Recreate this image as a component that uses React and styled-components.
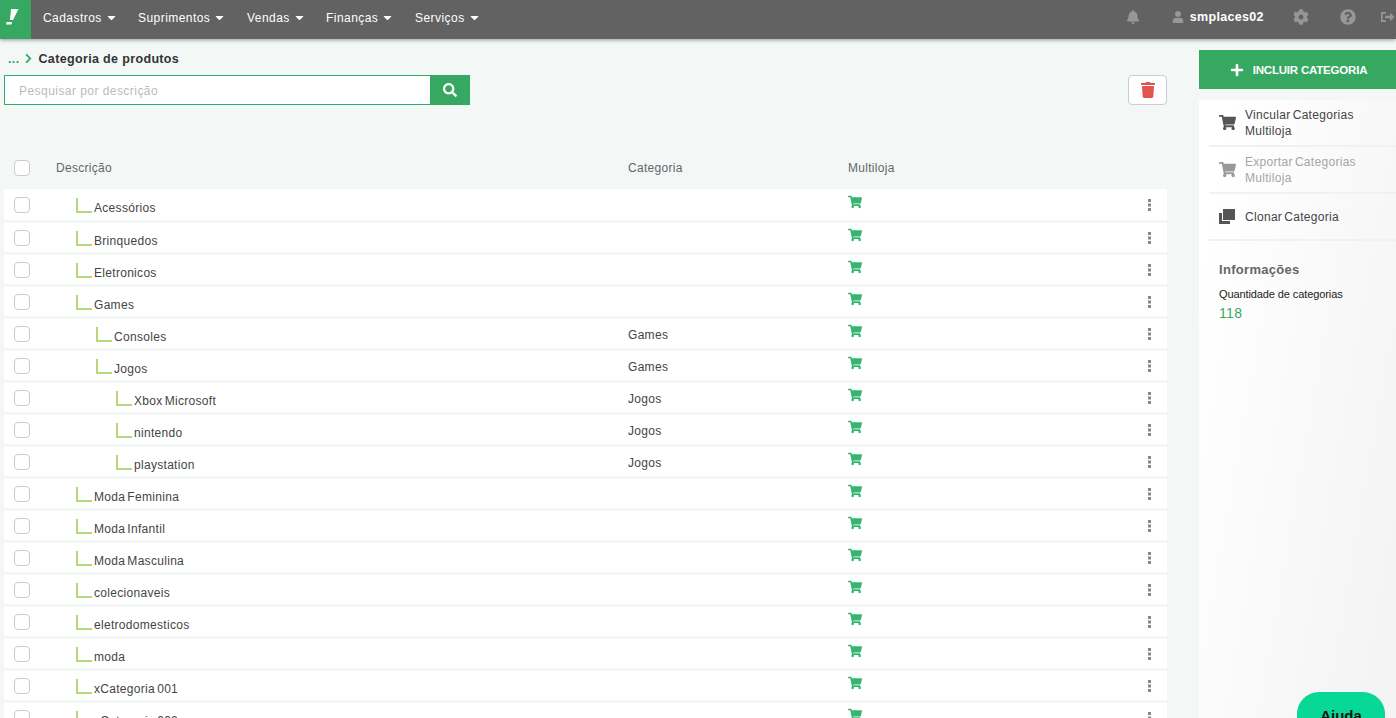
import React from 'react'
import styled, { createGlobalStyle } from 'styled-components'
import { FaBell, FaCaretDown, FaChevronRight, FaCog, FaPlus, FaQuestionCircle, FaSearch, FaShoppingCart, FaTrash, FaUser } from 'react-icons/fa'

const GlobalStyle = createGlobalStyle`
html, body {
  margin: 0;
  height: 718px;
  overflow: hidden;
  background: #f3f8f6;
  font-family: "Liberation Sans", Arial, sans-serif;
  font-size: 12px;
  letter-spacing: .3px;
  word-spacing: -1.5px;
  color: #555;
}
* { box-sizing: border-box; }
`

const Topbar = styled.header`
height: 39px;
display: flex;
align-items: center;
background: #616261;
box-shadow: 0 1px 4px rgba(0,0,0,.4);
position: relative;
overflow: hidden;
`
const Logo = styled.div`
width: 31px;
height: 39px;
flex: none;
background: #37a862;
padding: 9px 0 0 6px;
`
const NavList = styled.nav`
display: flex;
margin: 0 0 4px 12px;
flex: 1;
`
const NavItem = styled.div`
display: flex;
align-items: center;
gap: 3px;
color: #fff;
letter-spacing: .45px;
width: ${({$w}) => $w}px;
svg { font-size: 13px; }
`
const TopRight = styled.div`
display: flex;
align-items: center;
color: #979797;
width: 270px;
flex: none;
margin-bottom: 6px;
`
const TopIcon = styled.span`
display: flex;
width: ${({$w}) => $w}px;
font-size: ${({$s}) => $s || 15}px;
`
const UserName = styled.span`
color: #fff;
font-weight: 700;
font-size: 12.5px;
letter-spacing: .3px;
width: 104px;
margin-left: 6px;
`

const Page = styled.div`
display: flex;
height: 679px;
overflow: hidden;
`
const Content = styled.main`
width: 1199px;
flex: none;
padding: 0 32px 0 4px;
`
const Breadcrumb = styled.div`
height: 36px;
padding: 3px 0 0 4px;
display: flex;
align-items: center;
gap: 4px;
color: #333;
font-weight: 700;
font-size: 12.5px;
letter-spacing: .35px;
word-spacing: 0;
`
const Dots = styled.span`
color: #2bab62;
`
const Chevron = styled(FaChevronRight)`
color: #2bab62;
font-size: 11px;
`
const Toolbar = styled.div`
display: flex;
justify-content: space-between;
height: 30px;
`
const SearchBox = styled.div`
width: 466px;
display: flex;
`
const SearchInput = styled.input`
flex: 1;
min-width: 0;
border: 1px solid #2fab6c;
border-right: 0;
outline: none;
background: #fff;
padding: 1px 14px 0;
font: inherit;
letter-spacing: .45px;
word-spacing: 0;
&::placeholder { color: #bbb; }
`
const SearchButton = styled.button`
width: 40px;
border: 0;
background: #37a862;
color: #fff;
font-size: 14px;
display: flex;
align-items: center;
justify-content: center;
`
const TrashButton = styled.button`
width: 39px;
background: #fff;
border: 1px solid #ccc;
border-radius: 4px;
color: #e2554e;
font-size: 16px;
display: flex;
align-items: center;
justify-content: center;
`
const Table = styled.div`
display: flex;
flex-direction: column;
gap: 3px;
`
const Grid = styled.div`
display: grid;
grid-template-columns: 52px 572px 220px 1fr auto;
align-items: center;
`
const Head = styled(Grid)`
height: 37px;
margin-top: 44px;
color: #666;
`
const Row = styled(Grid)`
height: ${({$first}) => $first ? 31 : 29}px;
flex: none;
background: #fff;
`
const Check = styled.span`
width: 16px;
height: 16px;
margin-left: 10px;
background: #fff;
border: 1px solid #ccc;
border-radius: 4px;
`
const Name = styled.div`
display: flex;
align-items: flex-end;
padding-top: 2px;
padding-left: ${({$level}) => 20 + $level * 20}px;
color: #444;
`
const Elbow = styled.span`
width: 16px;
height: 15px;
flex: none;
margin-right: 2px;
border-left: 2px solid #b4d97c;
border-bottom: 2px solid #b4d97c;
`
const Label = styled.span`
position: relative;
top: 2px;
`
const Parent = styled.span`
padding-top: 2px;
color: #444;
`
const Cart = styled(FaShoppingCart)`
display: block;
color: #37b56e;
font-size: 14px;
position: relative;
top: -3px;
`
const KebabIcon = styled.svg`
margin-right: 16px;
color: #888;
`

const Sidebar = styled.aside`
flex: 1;
padding-top: 11px;
display: flex;
flex-direction: column;
`
const AddButton = styled.button`
height: 39px;
flex: none;
border: 0;
padding: 0 0 0 2px;
background: #37a862;
color: #fff;
font: 700 11.5px "Liberation Sans", Arial, sans-serif;
letter-spacing: -.2px;
display: flex;
align-items: center;
justify-content: center;
gap: 9px;
svg { font-size: 14px; }
`
const Panel = styled.div`
flex: 1;
margin-top: 11px;
background: linear-gradient(100deg, #fff 10%, #f4f4f4 90%);
`
const MenuItem = styled.div`
height: 47px;
margin-left: 10px;
border-bottom: 2px solid #f4eff0;
display: flex;
align-items: center;
padding-left: 10px;
line-height: 16px;
color: ${({$off}) => $off ? '#a5a5a5' : '#444'};
`
const MenuIcon = styled.span`
width: 26px;
flex: none;
display: flex;
font-size: 17px;
color: ${({$off}) => $off ? '#999' : '#555'};
`
const MenuText = styled.div`
width: 130px;
`
const Info = styled.div`
padding: 21px 0 0 20px;
`
const InfoTitle = styled.div`
font-weight: 700;
font-size: 13px;
color: #666;
`
const InfoLabel = styled.div`
margin-top: 11px;
font-size: 11px;
letter-spacing: -.1px;
word-spacing: 0;
color: #222;
`
const InfoValue = styled.div`
margin-top: 5px;
font-size: 14px;
color: #37a862;
`
const HelpButton = styled.button`
position: fixed;
left: 1297px;
top: 692px;
width: 88px;
height: 48px;
border: 0;
border-radius: 22px;
background: #08d896;
color: #111;
font: 700 15px "Liberation Sans", Arial, sans-serif;
padding: 0 0 2px;
`

const menu = ['Cadastros', 'Suprimentos', 'Vendas', 'Finanças', 'Serviços']
const navWidths = [95, 109, 79, 89, 80]

const rows = [
  { name: 'Acessórios', level: 0 },
  { name: 'Brinquedos', level: 0 },
  { name: 'Eletronicos', level: 0 },
  { name: 'Games', level: 0 },
  { name: 'Consoles', level: 1, parent: 'Games' },
  { name: 'Jogos', level: 1, parent: 'Games' },
  { name: 'Xbox Microsoft', level: 2, parent: 'Jogos' },
  { name: 'nintendo', level: 2, parent: 'Jogos' },
  { name: 'playstation', level: 2, parent: 'Jogos' },
  { name: 'Moda Feminina', level: 0 },
  { name: 'Moda Infantil', level: 0 },
  { name: 'Moda Masculina', level: 0 },
  { name: 'colecionaveis', level: 0 },
  { name: 'eletrodomesticos', level: 0 },
  { name: 'moda', level: 0 },
  { name: 'xCategoria 001', level: 0 },
  { name: 'xCategoria 002', level: 0 },
]

const LogoMark = () => (
  <svg width="13" height="16" viewBox="0 0 13 16" fill="#fff" style={{ display: 'block' }}>
    <path d="M5 0h7.5L7 11H4z" />
    <path d="M.5 13H6l-.5 2.5H0z" />
  </svg>
)

const SignOutIcon = () => (
  <svg width="18" height="12" viewBox="0 0 18 12" fill="none" stroke="currentColor" strokeWidth="2">
    <path d="M6 1H1v10h5" />
    <path d="M5 6h9" strokeWidth="3" />
    <path d="M11 1l5 5-5 5z" fill="currentColor" stroke="none" />
  </svg>
)

const CloneIcon = () => (
  <svg width="16" height="15" viewBox="0 0 16 15" fill="currentColor">
    <path d="M4 0h12v11H4z" />
    <path d="M0 4h3v8h8v3H0z" />
  </svg>
)

const Kebab = () => (
  <KebabIcon width="3" height="12" viewBox="0 0 3 12" fill="currentColor">
    <rect width="3" height="3" />
    <rect y="4.5" width="3" height="3" />
    <rect y="9" width="3" height="3" />
  </KebabIcon>
)

const App = () => {
  return (
    <>
      <GlobalStyle />
      <Topbar>
        <Logo><LogoMark /></Logo>
        <NavList>
          {menu.map((item, i) => (
            <NavItem key={item} $w={navWidths[i]}>{item} <FaCaretDown /></NavItem>
          ))}
        </NavList>
        <TopRight>
          <TopIcon $w={46} $s={14}><FaBell /></TopIcon>
          <TopIcon $w={12} $s={12}><FaUser /></TopIcon>
          <UserName>smplaces02</UserName>
          <TopIcon $w={47} $s={16}><FaCog /></TopIcon>
          <TopIcon $w={41} $s={16}><FaQuestionCircle /></TopIcon>
          <TopIcon $w={15}><SignOutIcon /></TopIcon>
        </TopRight>
      </Topbar>
      <Page>
        <Content>
          <Breadcrumb>
            <Dots>...</Dots>
            <Chevron />
            Categoria de produtos
          </Breadcrumb>
          <Toolbar>
            <SearchBox>
              <SearchInput placeholder="Pesquisar por descrição" />
              <SearchButton><FaSearch /></SearchButton>
            </SearchBox>
            <TrashButton><FaTrash /></TrashButton>
          </Toolbar>
          <Table>
            <Head>
              <Check />
              <span>Descrição</span>
              <span>Categoria</span>
              <span>Multiloja</span>
            </Head>
            {rows.map((row, i) => (
              <Row key={row.name} $first={i === 0}>
                <Check />
                <Name $level={row.level}>
                  <Elbow />
                  <Label>{row.name}</Label>
                </Name>
                <Parent>{row.parent}</Parent>
                <span><Cart /></span>
                <Kebab />
              </Row>
            ))}
          </Table>
        </Content>
        <Sidebar>
          <AddButton><FaPlus /> INCLUIR CATEGORIA</AddButton>
          <Panel>
            <MenuItem>
              <MenuIcon><FaShoppingCart /></MenuIcon>
              <MenuText>Vincular Categorias Multiloja</MenuText>
            </MenuItem>
            <MenuItem $off>
              <MenuIcon $off><FaShoppingCart /></MenuIcon>
              <MenuText>Exportar Categorias Multiloja</MenuText>
            </MenuItem>
            <MenuItem>
              <MenuIcon><CloneIcon /></MenuIcon>
              <MenuText>Clonar Categoria</MenuText>
            </MenuItem>
            <Info>
              <InfoTitle>Informações</InfoTitle>
              <InfoLabel>Quantidade de categorias</InfoLabel>
              <InfoValue>118</InfoValue>
            </Info>
          </Panel>
        </Sidebar>
      </Page>
      <HelpButton>Ajuda</HelpButton>
    </>
  )
}

export default App
